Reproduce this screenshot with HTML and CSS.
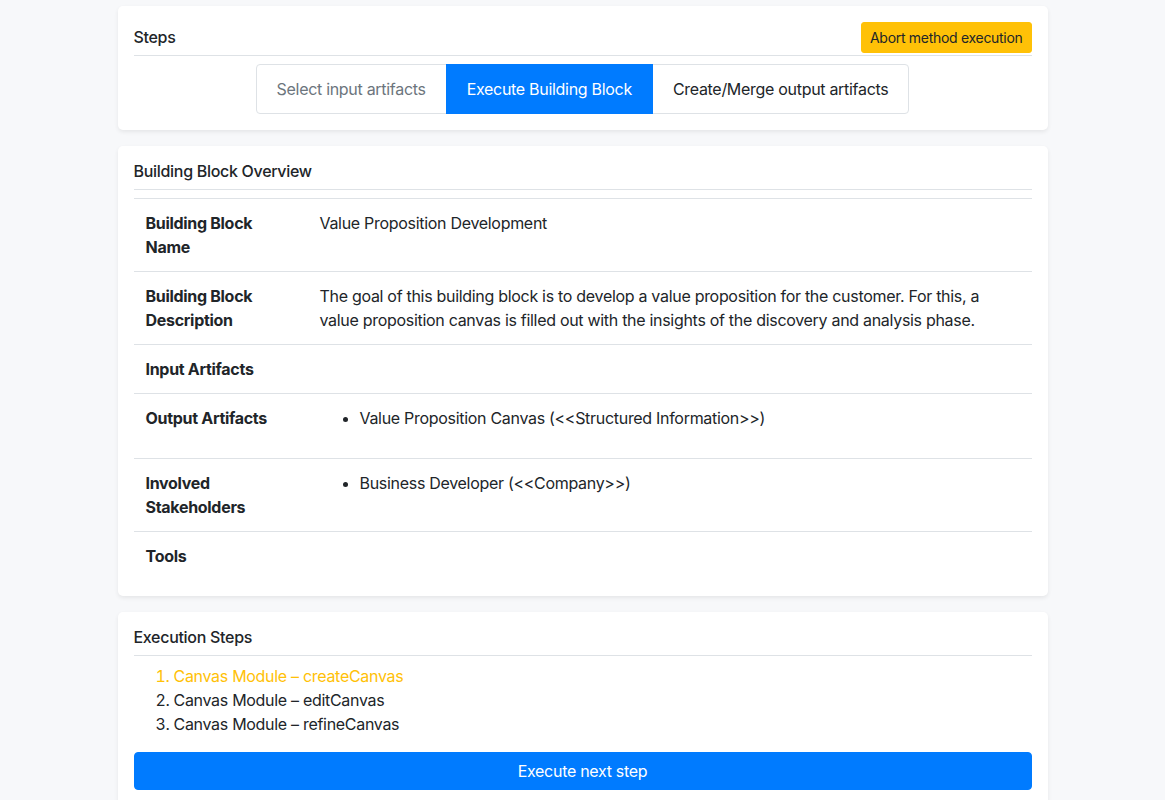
FILE: index.html
```html
<!DOCTYPE html>
<html lang="en">
<head>
<meta charset="utf-8">
<title>Building Block Execution</title>
<link rel="stylesheet" href="styles.css">
</head>
<body>
<main class="container">
  <section class="card">
    <div class="card-header header-steps">
      <h2 class="card-title">Steps</h2>
      <button class="btn-abort">Abort method execution</button>
    </div>
    <div class="step-group">
      <button class="step step-done">Select input artifacts</button>
      <button class="step step-active">Execute Building Block</button>
      <button class="step">Create/Merge output artifacts</button>
    </div>
  </section>

  <section class="card">
    <div class="card-header">
      <h2 class="card-title">Building Block Overview</h2>
    </div>
    <table class="overview">
      <tbody>
        <tr>
          <th>Building Block Name</th>
          <td>Value Proposition Development</td>
        </tr>
        <tr>
          <th>Building Block Description</th>
          <td>The goal of this building block is to develop a value proposition for the customer. For this, a value proposition canvas is filled out with the insights of the discovery and analysis phase.</td>
        </tr>
        <tr>
          <th>Input Artifacts</th>
          <td></td>
        </tr>
        <tr>
          <th>Output Artifacts</th>
          <td><ul class="cell-list"><li>Value Proposition Canvas (&lt;&lt;Structured Information&gt;&gt;)</li></ul></td>
        </tr>
        <tr>
          <th>Involved Stakeholders</th>
          <td><ul class="cell-list"><li>Business Developer (&lt;&lt;Company&gt;&gt;)</li></ul></td>
        </tr>
        <tr>
          <th>Tools</th>
          <td></td>
        </tr>
      </tbody>
    </table>
  </section>

  <section class="card">
    <div class="card-header">
      <h2 class="card-title">Execution Steps</h2>
    </div>
    <ol class="exec-list">
      <li class="current">Canvas Module – createCanvas</li>
      <li>Canvas Module – editCanvas</li>
      <li>Canvas Module – refineCanvas</li>
    </ol>
    <button class="btn-next">Execute next step</button>
  </section>
</main>
</body>
</html>
```

FILE: styles.css
```css
* { box-sizing: border-box; }

body {
  margin: 0;
  background: #f7f8fa;
  color: #212529;
  font-family: Inter, "Noto Sans", sans-serif;
  font-size: 16px;
  line-height: 1.5;
  letter-spacing: -0.3px;
}

.container {
  width: 930px;
  margin: 6px auto 0;
  display: flex;
  flex-direction: column;
  gap: 16px;
}

.card {
  background: #fff;
  border-radius: 5px;
  box-shadow: 0 2px 4px rgba(0, 0, 0, 0.075);
  padding: 16px;
}

.card-header {
  display: flex;
  align-items: center;
  justify-content: space-between;
  border-bottom: 1px solid #dee2e6;
  padding-bottom: 8px;
  margin-bottom: 8px;
}

.header-steps { padding-bottom: 2px; }

.card-title {
  margin: 0;
  font-size: 16px;
  font-weight: 500;
  line-height: 1.2;
}

.btn-abort {
  font-family: inherit;
  letter-spacing: inherit;
  font-size: 14px;
  line-height: 21px;
  padding: 4px 8px;
  border: 1px solid #ffc107;
  background: #ffc107;
  color: #212529;
  border-radius: 3px;
}

.step-group {
  display: flex;
  justify-content: center;
}

.step {
  font-family: inherit;
  letter-spacing: inherit;
  font-size: 16px;
  line-height: 24px;
  padding: 12px 20px;
  background: #fff;
  color: #212529;
  border: 1px solid #dee2e6;
  margin-left: -1px;
}
.step:first-child { border-radius: 4px 0 0 4px; margin-left: 0; }
.step:last-child { border-radius: 0 4px 4px 0; }
.step-done { color: #6c757d; }
.step-active {
  background: #007bff;
  border-color: #007bff;
  color: #fff;
  position: relative;
}

.overview {
  width: 100%;
  border-collapse: collapse;
}
.overview th,
.overview td {
  padding: 12px;
  border-top: 1px solid #dee2e6;
  vertical-align: top;
  text-align: left;
}
.overview th {
  width: 174px;
  font-weight: 700;
}

.cell-list {
  margin: 0 0 16px;
  padding-left: 40px;
}

.exec-list {
  margin: 0 0 16px;
  padding-left: 40px;
}
.exec-list .current { color: #ffc107; }

.btn-next {
  display: block;
  width: 100%;
  font-family: inherit;
  letter-spacing: inherit;
  font-size: 16px;
  line-height: 24px;
  padding: 6px 12px;
  border: 1px solid #007bff;
  background: #007bff;
  color: #fff;
  border-radius: 4px;
}
```
